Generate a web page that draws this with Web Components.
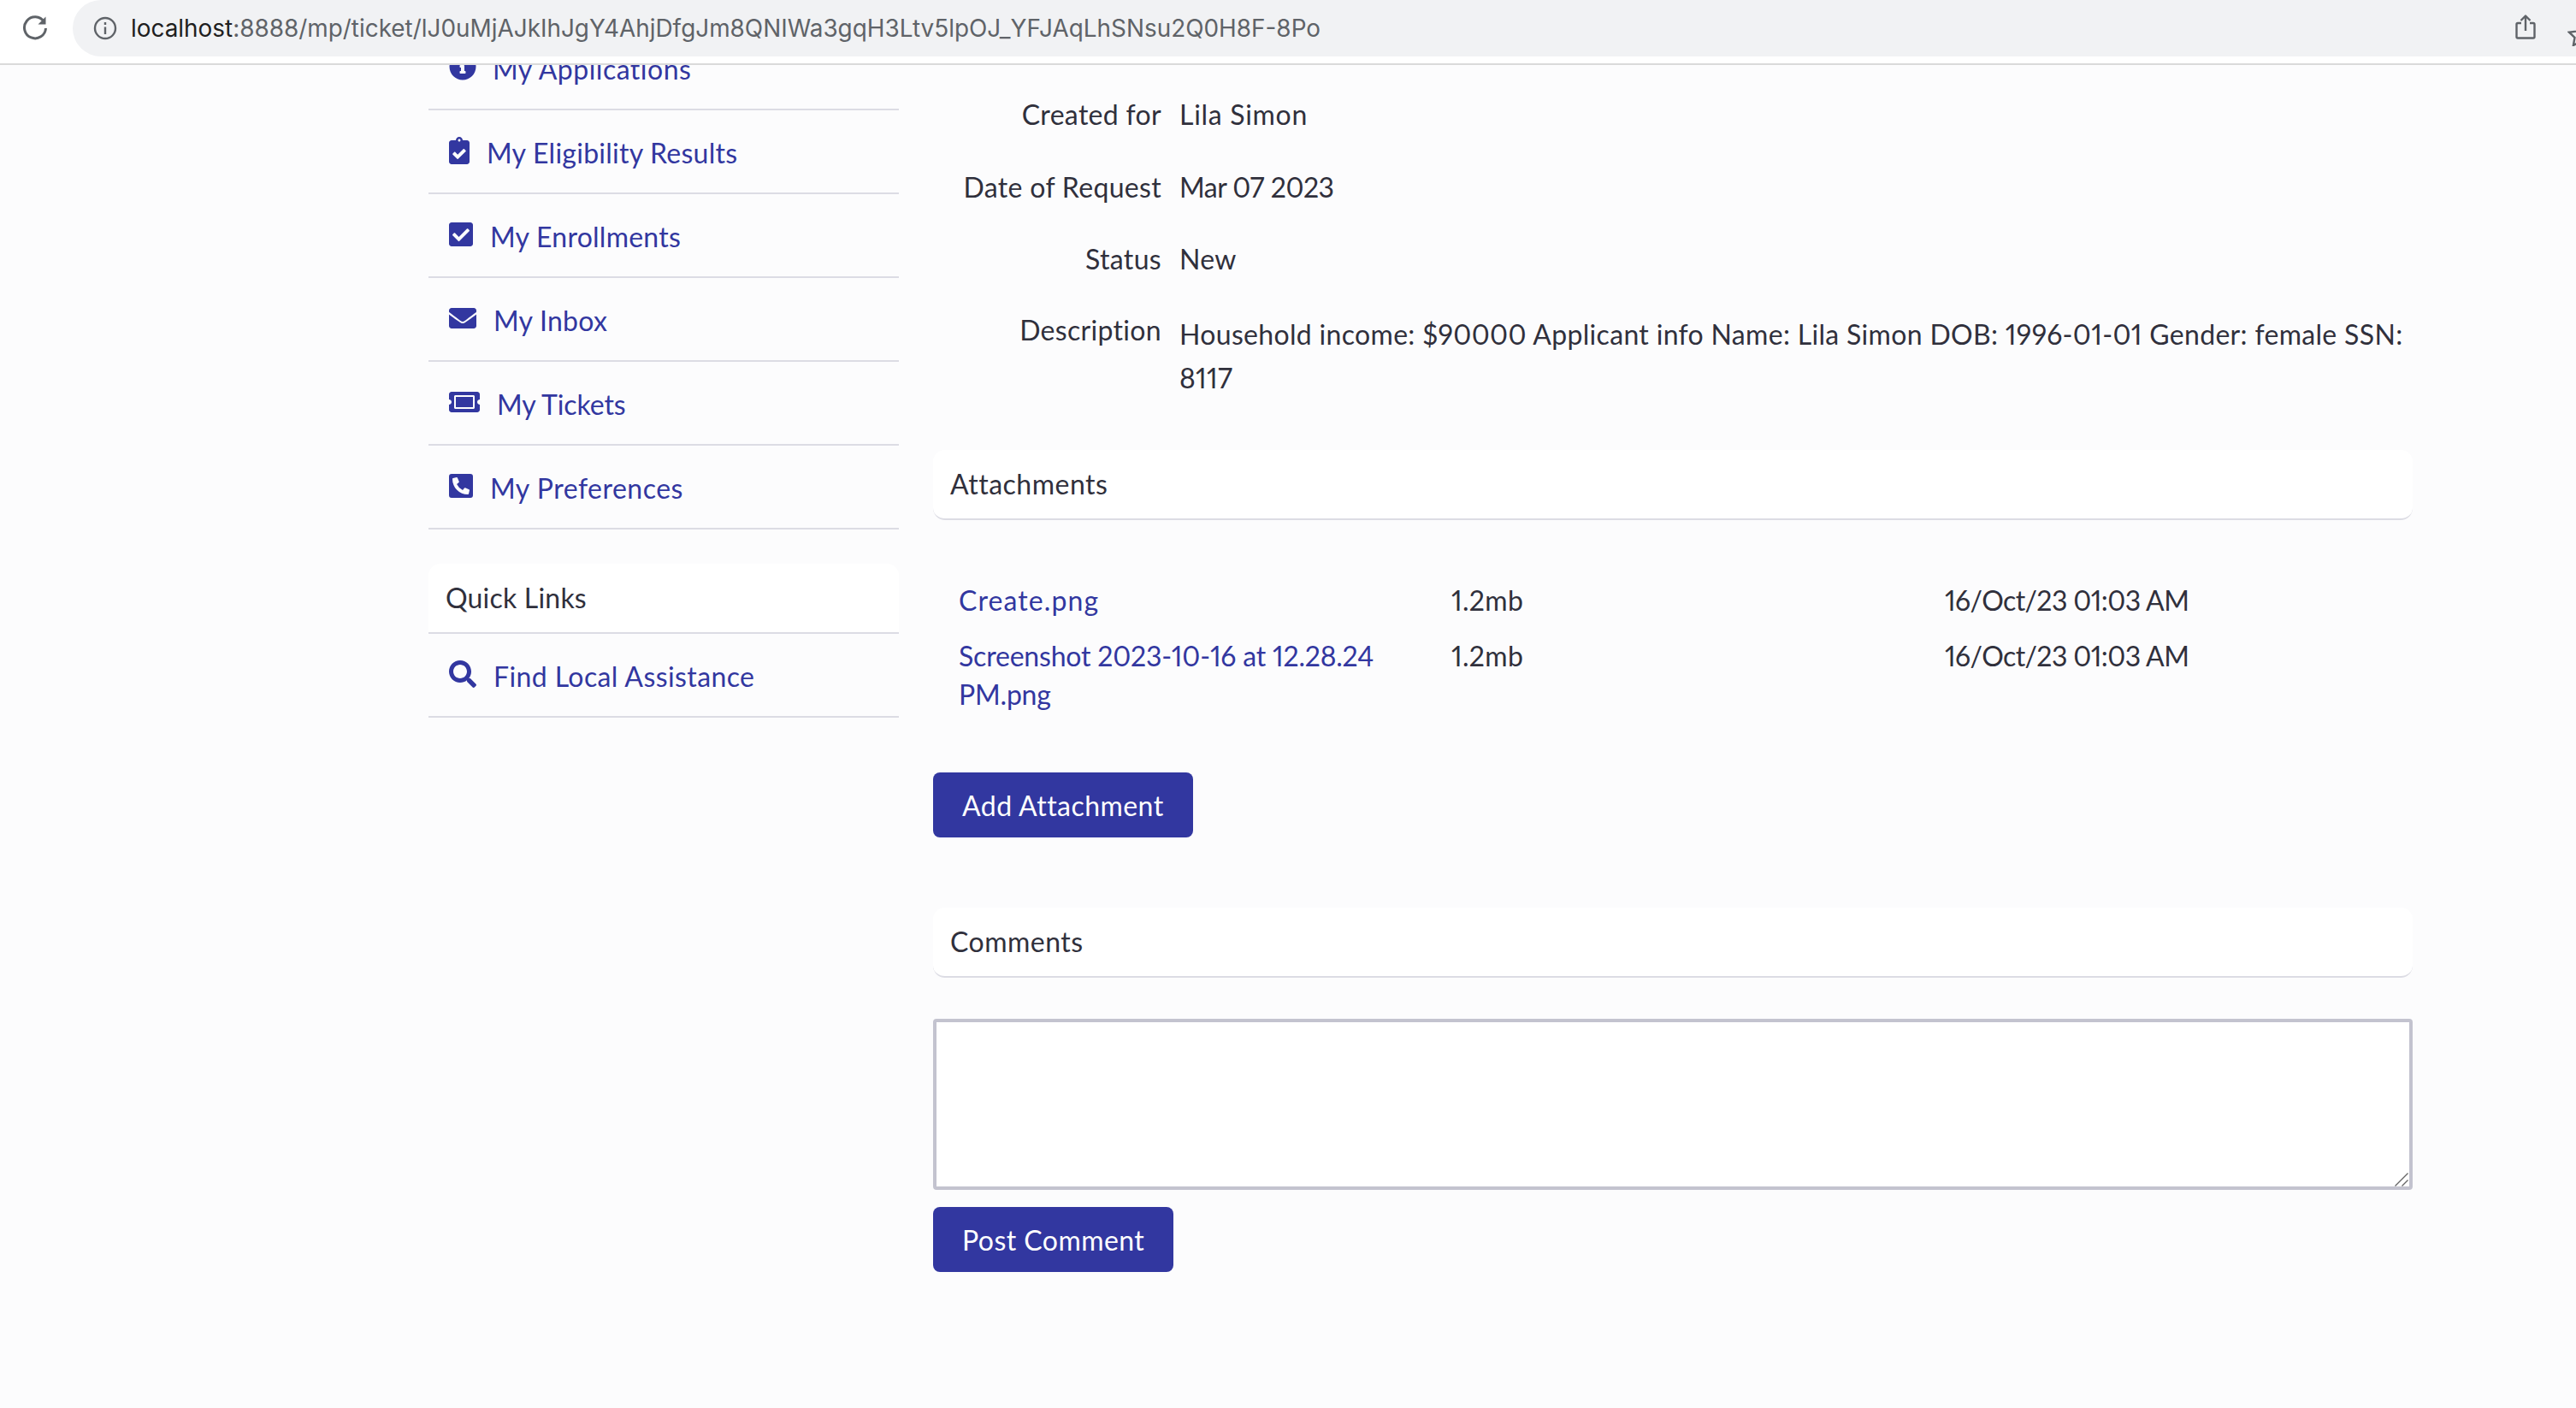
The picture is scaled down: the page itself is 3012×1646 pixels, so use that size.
<!DOCTYPE html>
<html lang="en">
<head>
<meta charset="utf-8">
<title>Ticket</title>
<style>
    html, body { margin: 0; height: 100%; overflow: hidden; background: #fcfcfd; }
    body { font-family: Lato, "Liberation Sans", sans-serif; font-size: 32px; color: #30303c; letter-spacing: .32px; font-variant-numeric: proportional-nums; }
</style>
</head>
<body>
<ticket-page>
    <browser-bar slot="bar" url-host="localhost" url-path=":8888/mp/ticket/lJ0uMjAJkIhJgY4AhjDfgJm8QNIWa3gqH3Ltv5lpOJ_YFJAqLhSNsu2Q0H8F-8Po"></browser-bar>

    <side-nav slot="side">
        <nav-item icon="info" gap="19" style="letter-spacing:.5px">My Applications</nav-item>
        <nav-item icon="clipboard">My Eligibility Results</nav-item>
        <nav-item icon="check">My Enrollments</nav-item>
        <nav-item icon="envelope" gap="20">My Inbox</nav-item>
        <nav-item icon="ticket" gap="20" style="letter-spacing:-.1px">My Tickets</nav-item>
        <nav-item icon="phone" style="letter-spacing:.5px">My Preferences</nav-item>
        <section-card class="quick" style="letter-spacing:.2px">Quick Links</section-card>
        <nav-item icon="search" gap="20" style="letter-spacing:.4px">Find Local Assistance</nav-item>
    </side-nav>

    <div slot="main">
        <detail-row label="Created for"><span style="letter-spacing:.7px">Lila Simon</span></detail-row>
        <detail-row label="Date of Request"><span style="letter-spacing:-.5px">Mar 07 2023</span></detail-row>
        <detail-row label="Status">New</detail-row>
        <detail-row label="Description" wide>Household income: $90000 Applicant info Name: Lila Simon DOB: 1996-01-01 Gender: female SSN: 8117</detail-row>

        <section-card rounded style="margin-top:59px">Attachments</section-card>
        <attachment-list style="margin-top:71px">
            <attachment-row name="Create.png" name-spacing="1.1" size="1.2mb" date="16/Oct/23 01:03 AM"></attachment-row>
            <attachment-row name="Screenshot 2023-10-16 at 12.28.24 PM.png" name-spacing="-.2" size="1.2mb" date="16/Oct/23 01:03 AM"></attachment-row>
        </attachment-list>
        <action-button style="margin-top:69px">Add Attachment</action-button>

        <section-card rounded style="margin-top:82px">Comments</section-card>
        <comment-box style="margin-top:48px"></comment-box>
        <action-button style="margin-top:20px">Post Comment</action-button>
    </div>
</ticket-page>

<script>
const ICONS = {
    info: ['0 0 512 512', 'M256 8C119.043 8 8 119.083 8 256c0 136.997 111.043 248 248 248s248-111.003 248-248C504 119.083 392.957 8 256 8zm0 110c23.196 0 42 18.804 42 42s-18.804 42-42 42-42-18.804-42-42 18.804-42 42-42zm56 254c0 6.627-5.373 12-12 12h-88c-6.627 0-12-5.373-12-12v-24c0-6.627 5.373-12 12-12h12v-64h-12c-6.627 0-12-5.373-12-12v-24c0-6.627 5.373-12 12-12h64c6.627 0 12 5.373 12 12v100h12c6.627 0 12 5.373 12 12v24z'],
    clipboard: ['0 0 384 512', 'M336 64h-80c0-35.3-28.7-64-64-64s-64 28.7-64 64H48C21.5 64 0 85.5 0 112v352c0 26.5 21.5 48 48 48h288c26.5 0 48-21.5 48-48V112c0-26.5-21.5-48-48-48zM192 40c13.3 0 24 10.7 24 24s-10.7 24-24 24-24-10.7-24-24 10.7-24 24-24zm121.2 231.8l-143 141.8c-4.7 4.7-12.3 4.6-17-.1l-82.6-83.3c-4.7-4.7-4.6-12.3.1-17L99.1 285c4.7-4.7 12.3-4.6 17 .1l46 46.4 106-105.2c4.7-4.7 12.3-4.6 17 .1l28.2 28.4c4.7 4.8 4.6 12.3-.1 17z'],
    check: ['0 0 448 512', 'M400 480H48c-26.51 0-48-21.49-48-48V80c0-26.51 21.49-48 48-48h352c26.51 0 48 21.49 48 48v352c0 26.51-21.49 48-48 48zm-204.686-98.059l184-184c6.248-6.248 6.248-16.379 0-22.627l-22.627-22.627c-6.248-6.248-16.379-6.249-22.628 0L184 302.745l-70.059-70.059c-6.248-6.248-16.379-6.248-22.628 0l-22.627 22.627c-6.248 6.248-6.248 16.379 0 22.627l104 104c6.249 6.25 16.379 6.25 22.628.001z'],
    envelope: ['0 0 512 512', 'M502.3 190.8c3.9-3.1 9.7-.2 9.7 4.7V400c0 26.5-21.5 48-48 48H48c-26.5 0-48-21.5-48-48V195.6c0-5 5.7-7.8 9.7-4.7 22.4 17.4 52.1 39.5 154.1 113.6 21.1 15.4 56.7 47.8 92.2 47.6 35.7.3 72-32.8 92.3-47.6 102-74.1 131.6-96.3 154-113.7zM256 320c23.2.4 56.6-29.2 73.4-41.4 132.7-96.3 142.8-104.7 173.4-128.7 5.8-4.5 9.2-11.5 9.2-18.9v-19c0-26.5-21.5-48-48-48H48C21.5 64 0 85.5 0 112v19c0 7.4 3.4 14.3 9.2 18.9 30.6 23.9 40.7 32.4 173.4 128.7 16.8 12.2 50.2 41.8 73.4 41.4z'],
    ticket: ['0 0 576 512', 'M128 160h320v192H128V160zm400 96c0 26.51 21.49 48 48 48v96c0 26.51-21.49 48-48 48H48c-26.51 0-48-21.49-48-48v-96c26.51 0 48-21.49 48-48s-21.49-48-48-48v-96c0-26.51 21.49-48 48-48h480c26.51 0 48 21.49 48 48v96c-26.51 0-48 21.49-48 48zm-48-104c0-13.255-10.745-24-24-24H120c-13.255 0-24 10.745-24 24v208c0 13.255 10.745 24 24 24h336c13.255 0 24-10.745 24-24V152z'],
    phone: ['0 0 448 512', 'M400 32H48A48 48 0 0 0 0 80v352a48 48 0 0 0 48 48h352a48 48 0 0 0 48-48V80a48 48 0 0 0-48-48zm-16.39 307.37l-15 65A15 15 0 0 1 354 416C194 416 64 286.29 64 126a15.7 15.7 0 0 1 11.63-14.61l65-15A18.23 18.23 0 0 1 144 96a16.27 16.27 0 0 1 13.79 9.09l30 70A17.9 17.9 0 0 1 189 181a17 17 0 0 1-5.5 11.61l-37.89 31a231.91 231.91 0 0 0 110.78 110.78l31-37.89A17 17 0 0 1 299 291a17.85 17.85 0 0 1 5.91 1.21l70 30A16.25 16.25 0 0 1 384 336a17.41 17.41 0 0 1-.39 3.37z'],
    search: ['0 0 512 512', 'M505 442.7L405.3 343c-4.5-4.5-10.6-7-17-7H372c27.6-35.3 44-79.7 44-128C416 93.1 322.9 0 208 0S0 93.1 0 208s93.1 208 208 208c48.3 0 92.7-16.4 128-44v16.3c0 6.4 2.5 12.5 7 17l99.7 99.7c9.4 9.4 24.6 9.4 33.9 0l28.3-28.3c9.4-9.4 9.4-24.6.1-34zM208 336c-70.7 0-128-57.2-128-128 0-70.7 57.2-128 128-128 70.7 0 128 57.2 128 128 0 70.7-57.2 128-128 128z']
}

class TicketPage extends HTMLElement {
    constructor() {
        super()
        this.attachShadow({ mode: 'open' })
        this.shadowRoot.innerHTML = `
            <style>
                :host { display: flex; flex-direction: column; height: 1646px; overflow: hidden; }
                .scroll { flex: 1; min-height: 0; overflow: hidden; }
                .columns { display: grid; grid-template-columns: 550px 1730px; column-gap: 40px; padding-left: 501px; align-items: start; }
            </style>
            <slot name="bar"></slot>
            <div class="scroll">
                <div class="columns">
                    <slot name="side"></slot>
                    <slot name="main"></slot>
                </div>
            </div>
        `
    }
}

class BrowserBar extends HTMLElement {
    constructor() {
        super()
        this.attachShadow({ mode: 'open' })
        this.shadowRoot.innerHTML = `
            <style>
                :host { display: block; height: 76px; box-sizing: border-box; background: #fff; border-bottom: 2px solid #dadada; position: relative; z-index: 2; overflow: hidden; letter-spacing: 0; }
                .row { display: flex; align-items: flex-start; height: 66px; }
                .reload { width: 85px; flex: none; display: flex; justify-content: center; padding: 16px 4px 0 0; box-sizing: border-box; }
                .pill { flex: 1; height: 66px; background: #f1f2f4; border-radius: 33px 0 0 33px; display: flex; align-items: center; padding-left: 24px; position: relative; }
                .url { margin-left: 16px; font: 27.9px Inter, "Liberation Sans", Arial, sans-serif; color: #5f6368; white-space: nowrap; }
                .url b { font-weight: 400; color: #1f1f1f; }
                .share { position: absolute; left: 2941px; top: 17px; }
                .star { position: absolute; left: 3002px; top: 26px; }
            </style>
            <div class="row">
                <div class="reload">
                    <svg width="30" height="32" viewBox="0 0 30 32" fill="none" stroke="#5f6368" stroke-width="3">
                        <path d="M25.5 9.5A12.5 12.5 0 1 0 27.5 17"/>
                        <path d="M27.5 3.5v9h-9z" fill="#5f6368" stroke="none"/>
                    </svg>
                </div>
                <div class="pill">
                    <svg width="28" height="28" viewBox="0 0 28 28" fill="none" stroke="#5f6368" stroke-width="2.4">
                        <circle cx="14" cy="14" r="12"/>
                        <path d="M14 12.5v8.5M14 7v3"/>
                    </svg>
                    <span class="url"><b>${this.getAttribute('url-host')}</b>${this.getAttribute('url-path')}</span>
                </div>
            </div>
            <svg class="share" width="24" height="30" viewBox="0 0 24 30" fill="none" stroke="#5f6368" stroke-width="2.4" stroke-linejoin="round">
                <path d="M7 10H3a1.5 1.5 0 0 0-1.5 1.5V26A1.5 1.5 0 0 0 3 27.5h18a1.5 1.5 0 0 0 1.5-1.5V11.5A1.5 1.5 0 0 0 21 10h-4"/>
                <path d="M12 19V2M6.5 7 12 1.5 17.5 7"/>
            </svg>
            <svg class="star" width="30" height="28" viewBox="0 0 30 28" fill="none" stroke="#5f6368" stroke-width="2.4">
                <path d="M15 2l4 8.5 9 1.2-6.5 6.3 1.6 9L15 22.6 6.9 27l1.6-9L2 11.7l9-1.2z"/>
            </svg>
        `
    }
}

class SideNav extends HTMLElement {
    constructor() {
        super()
        this.attachShadow({ mode: 'open' })
        this.shadowRoot.innerHTML = `
            <style>
                :host { display: block; margin-top: -45px; }
                ::slotted(.quick) { margin-top: 40px; }
            </style>
            <slot></slot>
        `
    }
}

class NavItem extends HTMLElement {
    constructor() {
        super()
        this.attachShadow({ mode: 'open' })
        const [box, d] = ICONS[this.getAttribute('icon')]
        const ratio = parseInt(box.split(' ')[2]) / 512
        const gap = this.getAttribute('gap') || 20
        this.shadowRoot.innerHTML = `
            <style>
                :host { display: block; height: 98px; box-sizing: border-box; border-bottom: 2px solid #dcdce4; color: #3237a0; letter-spacing: .25px; }
                a { display: flex; align-items: center; height: 96px; padding-left: 24px; color: inherit; text-decoration: none; }
                svg { height: 32px; flex: none; fill: currentColor; margin-top: -3px; }
                span { margin-left: ${gap}px; padding-top: 2px; }
            </style>
            <a href="#">
                <svg width="${32 * ratio}" viewBox="${box}"><path d="${d}"/></svg>
                <span><slot></slot></span>
            </a>
        `
    }
}

class SectionCard extends HTMLElement {
    constructor() {
        super()
        this.attachShadow({ mode: 'open' })
        const radius = this.hasAttribute('rounded') ? '14px' : '14px 14px 0 0'
        this.shadowRoot.innerHTML = `
            <style>
                :host { display: block; height: 82px; box-sizing: border-box; background: #fff; border-bottom: 2px solid #dcdce4; border-radius: ${radius}; padding: 0 20px; line-height: 80px; color: #30303c; letter-spacing: .5px; }
            </style>
            <slot></slot>
        `
    }
}

class DetailRow extends HTMLElement {
    constructor() {
        super()
        this.attachShadow({ mode: 'open' })
        const wide = this.hasAttribute('wide')
        this.shadowRoot.innerHTML = `
            <style>
                :host { display: grid; grid-template-columns: 267px 1fr; column-gap: 21px; line-height: 51px; margin-top: ${wide ? '31.5px' : '33.5px'}; }
                :host(:first-child) { margin-top: 32px; }
                .label { text-align: right; }
                .value { ${wide ? 'padding-top: 5px;' : ''} }
            </style>
            <div class="label">${this.getAttribute('label')}</div>
            <div class="value"><slot></slot></div>
        `
    }
}

class AttachmentList extends HTMLElement {
    constructor() {
        super()
        this.attachShadow({ mode: 'open' })
        this.shadowRoot.innerHTML = `
            <style>
                :host { display: flex; flex-direction: column; gap: 20px; padding-left: 30px; }
            </style>
            <slot></slot>
        `
    }
}

class AttachmentRow extends HTMLElement {
    constructor() {
        super()
        this.attachShadow({ mode: 'open' })
        this.shadowRoot.innerHTML = `
            <style>
                :host { display: grid; grid-template-columns: 576px 577px 1fr; line-height: 45px; }
                a { color: #3237a0; text-decoration: none; display: block; width: 520px; letter-spacing: ${this.getAttribute('name-spacing')}px; }
                .date { letter-spacing: -.6px; }
            </style>
            <a href="#">${this.getAttribute('name')}</a>
            <div>${this.getAttribute('size')}</div>
            <div class="date">${this.getAttribute('date')}</div>
        `
    }
}

class ActionButton extends HTMLElement {
    constructor() {
        super()
        this.attachShadow({ mode: 'open' })
        this.shadowRoot.innerHTML = `
            <style>
                :host { display: block; }
                button { display: block; height: 76px; padding: 2px 34px 0; border: 0; border-radius: 8px; background: #3237a0; color: #fff; font: inherit; letter-spacing: .45px; }
            </style>
            <button type="button"><slot></slot></button>
        `
    }
}

class CommentBox extends HTMLElement {
    constructor() {
        super()
        this.attachShadow({ mode: 'open' })
        this.shadowRoot.innerHTML = `
            <style>
                :host { display: block; position: relative; }
                textarea { display: block; width: 100%; height: 200px; box-sizing: border-box; border: 4px solid #c3c3cf; border-radius: 4px; background: #fff; outline: 0; font: inherit; resize: none; }
                svg { position: absolute; right: 5px; bottom: 4px; }
            </style>
            <textarea></textarea>
            <svg width="16" height="16" viewBox="0 0 16 16" fill="none" stroke="#666" stroke-width="1.4">
                <path d="M0.5 15.5 15.5 0.5M8.5 15.5 15.5 8.5"/>
            </svg>
        `
    }
}

customElements.define('ticket-page', TicketPage)
customElements.define('browser-bar', BrowserBar)
customElements.define('side-nav', SideNav)
customElements.define('nav-item', NavItem)
customElements.define('section-card', SectionCard)
customElements.define('detail-row', DetailRow)
customElements.define('attachment-list', AttachmentList)
customElements.define('attachment-row', AttachmentRow)
customElements.define('action-button', ActionButton)
customElements.define('comment-box', CommentBox)
</script>
</body>
</html>
